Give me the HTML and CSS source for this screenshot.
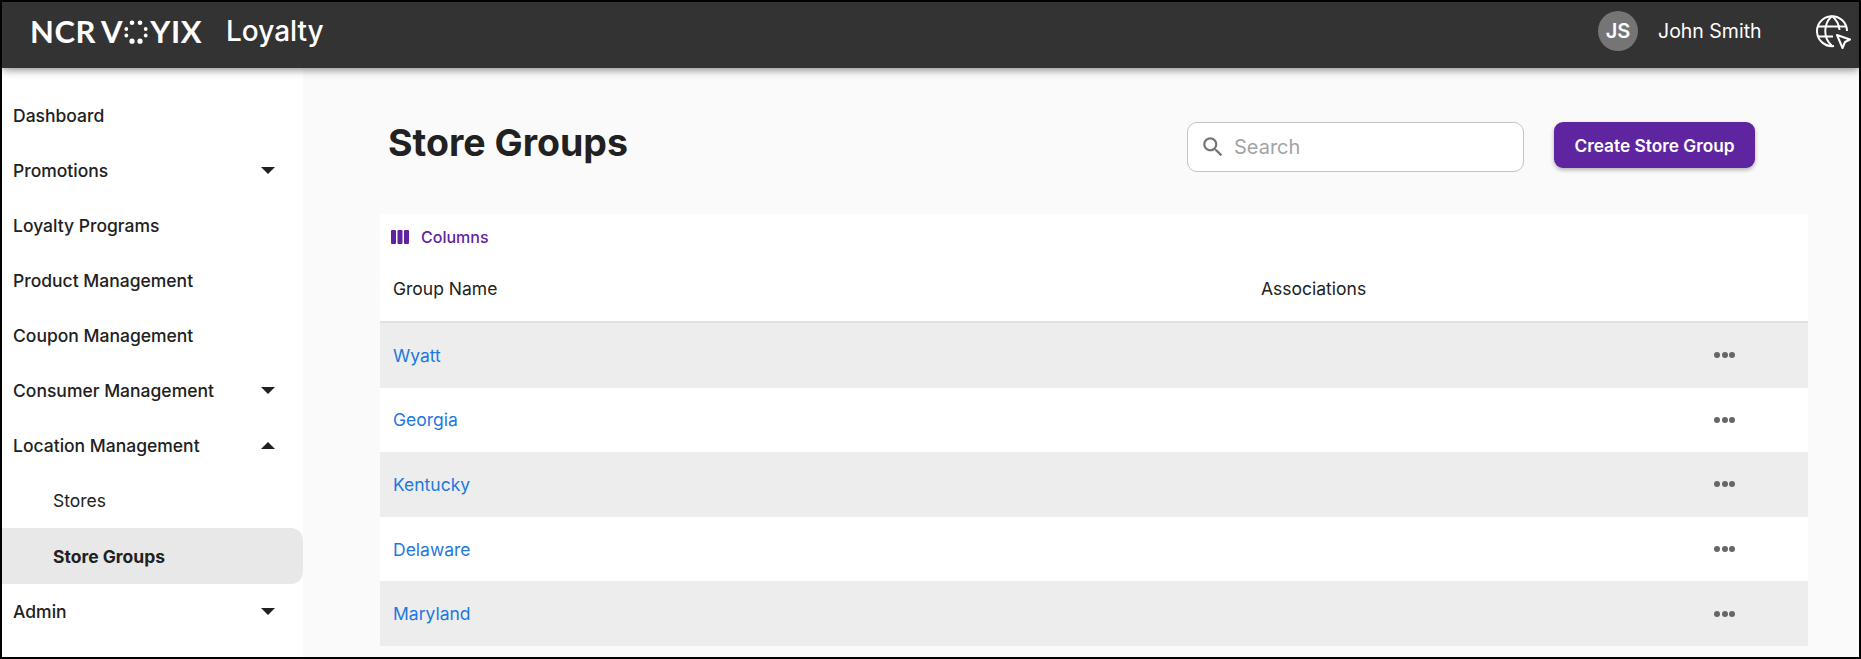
FILE: index.html
```html
<!DOCTYPE html>
<html lang="en">
<head>
    <meta charset="UTF-8">
    <title>Store Groups</title>
    <link rel="stylesheet" href="styles.css">
</head>
<body>
    <div class="app">
        <header class="topbar">
            <div class="logo">
                <span>NCR V</span>
                <svg class="logo-dots" width="24" height="24" viewBox="0 0 24 24" fill="#fff">
                    <circle cx="8" cy="2.800" r="2.300"/><circle cx="16" cy="2.800" r="2.300"/>
                    <circle cx="2.300" cy="9" r="1.900"/><circle cx="21.700" cy="9" r="1.900"/>
                    <circle cx="2.300" cy="15.500" r="1.900"/><circle cx="21.700" cy="15.500" r="1.900"/>
                    <circle cx="8" cy="21.200" r="2.600"/><circle cx="16" cy="21.200" r="2.600"/>
                </svg>
                <span>YIX</span>
            </div>
            <div class="app-name">Loyalty</div>
            <div class="avatar">JS</div>
            <div class="user-name">John Smith</div>
            <svg class="globe" width="36" height="36" viewBox="0 0 36 36" fill="none" stroke="#fff" stroke-width="2">
                <path d="M31 18A15 15 0 1 0 18 33"/>
                <path d="M2 13.500h28M2 23.500h15"/>
                <path d="M16 3c-9 8-9 22 0 30M16 3c5 4 7 9 7.500 14"/>
                <path d="M21 22l13 4.500-5 2.500-2.500 6z" stroke-linejoin="round"/>
            </svg>
        </header>
        <div class="main">
            <nav class="sidebar">
                <div class="nav-item">Dashboard</div>
                <div class="nav-item">Promotions <i class="caret"></i></div>
                <div class="nav-item">Loyalty Programs</div>
                <div class="nav-item">Product Management</div>
                <div class="nav-item">Coupon Management</div>
                <div class="nav-item">Consumer Management <i class="caret"></i></div>
                <div class="nav-item">Location Management <i class="caret up"></i></div>
                <div class="nav-item sub">Stores</div>
                <div class="nav-item sub active">Store Groups</div>
                <div class="nav-item">Admin <i class="caret"></i></div>
            </nav>
            <main class="content">
                <div class="page-head">
                    <h1>Store Groups</h1>
                    <div class="search">
                        <svg width="26" height="26" viewBox="0 0 24 24" fill="#757575"><path d="M15.500 14h-.79l-.28-.27C15.410 12.590 16 11.110 16 9.500 16 5.910 13.090 3 9.500 3S3 5.910 3 9.500 5.910 16 9.500 16c1.610 0 3.090-.59 4.230-1.570l.27.28v.79l5 4.990L20.490 19l-4.990-5zm-6 0C7.010 14 5 11.990 5 9.500S7.010 5 9.500 5 14 7.010 14 9.500 11.990 14 9.500 14z"/></svg>
                        <span>Search</span>
                    </div>
                    <button class="create-btn">Create Store Group</button>
                </div>
                <section class="grid">
                    <div class="toolbar">
                        <svg width="20" height="20" viewBox="0 0 20 20" fill="#5f249f"><rect x="1" y="3" width="5" height="14" rx="1"/><rect x="7.500" y="3" width="5" height="14" rx="1"/><rect x="14" y="3" width="5" height="14" rx="1"/></svg>
                        <span>Columns</span>
                    </div>
                    <div class="grid-head">
                        <div class="col-name">Group Name</div>
                        <div class="col-assoc">Associations</div>
                    </div>
                    <div class="row"><a class="col-name">Wyatt</a><div class="dots"><i></i><i></i><i></i></div></div>
                    <div class="row"><a class="col-name">Georgia</a><div class="dots"><i></i><i></i><i></i></div></div>
                    <div class="row"><a class="col-name">Kentucky</a><div class="dots"><i></i><i></i><i></i></div></div>
                    <div class="row"><a class="col-name">Delaware</a><div class="dots"><i></i><i></i><i></i></div></div>
                    <div class="row"><a class="col-name">Maryland</a><div class="dots"><i></i><i></i><i></i></div></div>
                </section>
            </main>
        </div>
    </div>
</body>
</html>
```

FILE: styles.css
```css
* {
    box-sizing: border-box;
}
html, body {
    margin: 0;
    height: 100%;
}
body {
    font-family: 'Inter', sans-serif;
    color: #212121;
    overflow: hidden;
}
.app {
    height: 659px;
    border: 2px solid #000;
    display: flex;
    flex-direction: column;
    background: #fafafa;
    overflow: hidden;
}

/* top bar */
.topbar {
    height: 66px;
    flex-shrink: 0;
    background: #333333;
    color: white;
    display: flex;
    align-items: center;
    padding: 0 0 8px 28px;
    box-shadow: 0 2px 8px rgba(0, 0, 0, 0.45);
    position: relative;
    z-index: 2;
}
.logo {
    display: flex;
    align-items: center;
    font-family: 'Lato', sans-serif;
    font-weight: 700;
    font-size: 31px;
    letter-spacing: 0.6px;
    word-spacing: -2px;
    width: 196px;
    white-space: nowrap;
}
.logo-dots {
    margin: 1px 2px 0 1px;
}
.app-name {
    font-size: 28px;
    font-weight: 500;
    flex: 1;
}
.avatar {
    width: 40px;
    height: 40px;
    border-radius: 50%;
    background: #757575;
    display: flex;
    align-items: center;
    justify-content: center;
    font-size: 20px;
    font-weight: 600;
}
.user-name {
    font-size: 19.500px;
    font-weight: 400;
    margin-left: 20px;
    width: 158px;
}
.globe {
    margin-right: 7px;
}

.main {
    flex: 1;
    display: flex;
    min-height: 0;
}

/* sidebar */
.sidebar {
    width: 301px;
    flex-shrink: 0;
    background: white;
    padding-top: 20px;
}
.nav-item {
    height: 55px;
    display: flex;
    align-items: center;
    justify-content: space-between;
    padding: 0 28px 0 11px;
    font-size: 17.500px;
    font-weight: 500;
    white-space: nowrap;
}
.caret {
    width: 0;
    height: 0;
    border-left: 7px solid transparent;
    border-right: 7px solid transparent;
    border-top: 7px solid #212121;
}
.caret.up {
    border-top: none;
    border-bottom: 7px solid #212121;
}
.sub {
    padding-left: 51px;
    font-weight: 400;
}
.active {
    background: #e8e8e8;
    font-weight: 700;
    border-radius: 0 12px 12px 0;
    height: 56px;
}

/* page */
.content {
    flex: 1;
    padding: 55px 52px 0 77px;
    min-width: 0;
}
.page-head {
    display: flex;
    align-items: flex-start;
    height: 91px;
    padding-left: 8px;
}
h1 {
    margin: -1px 0 0;
    font-size: 37.500px;
    font-weight: 700;
    line-height: 42px;
    width: 799px;
}
.search {
    width: 337px;
    height: 50px;
    margin-top: -1px;
    background: white;
    border: 1px solid #c4c4c4;
    border-radius: 10px;
    display: flex;
    align-items: center;
    padding-left: 12px;
    gap: 8px;
    font-size: 20px;
    color: #a3a3a3;
}
.create-btn {
    width: 201px;
    height: 46px;
    margin-left: 30px;
    margin-top: -1px;
    border: none;
    border-radius: 9px;
    background: #5f249f;
    color: white;
    font-family: inherit;
    font-size: 17.300px;
    font-weight: 600;
    box-shadow: 0 2px 4px rgba(0, 0, 0, 0.3);
}

/* data grid */
.grid {
    background: white;
    width: 1428px;
}
.toolbar {
    height: 46px;
    display: flex;
    align-items: center;
    gap: 11px;
    padding-left: 10px;
    font-size: 16px;
    font-weight: 500;
    color: #5f249f;
}
.grid-head {
    height: 63px;
    display: flex;
    align-items: center;
    font-weight: 400;
    font-size: 17.500px;
    border-bottom: 2px solid #e0e0e0;
    padding-bottom: 4px;
}
.col-name {
    padding-left: 13px;
    width: 881px;
}
.row {
    height: 64.600px;
    display: flex;
    align-items: center;
    justify-content: space-between;
    font-size: 17.500px;
    padding-right: 73px;
}
.row a {
    color: #1e78e0;
}
.row:nth-child(odd) {
    background: #ededed;
}
.dots {
    display: flex;
    gap: 1.500px;
}
.dots i {
    width: 6px;
    height: 6px;
    border-radius: 50%;
    background: #666;
}
```
